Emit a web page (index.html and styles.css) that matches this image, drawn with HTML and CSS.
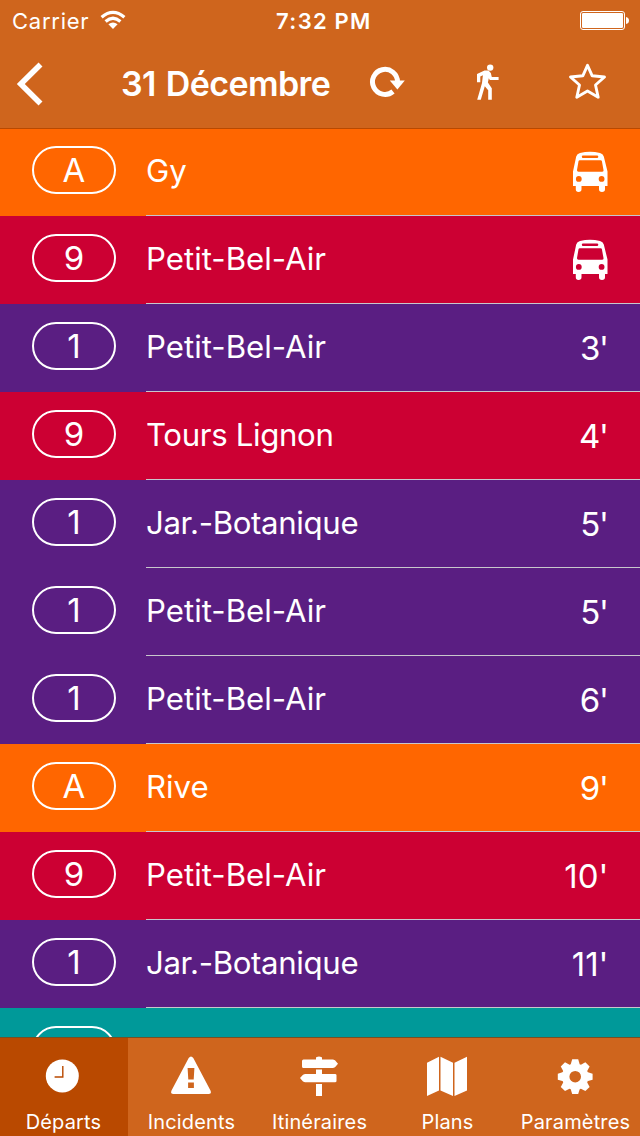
FILE: index.html
```html
<!DOCTYPE html>
<html lang="fr">
<head>
<meta charset="utf-8">
<title>31 Décembre</title>
<link rel="stylesheet" href="styles.css">
</head>
<body>
<svg class="defs" width="0" height="0">
  <symbol id="bus" viewBox="0 0 36 42">
    <path fill="currentColor" fill-rule="evenodd" d="M1 35V20.500L4.200 5.500Q5 2.800 8 2.100Q18 -.5 28 2.100Q31 2.800 31.800 5.500L35.500 20.500V35H33V38.300Q33 41 30 41Q27 41 27 38.300V35H9.500V38.300Q9.500 41 6.500 41Q3.800 41 3.800 38.300V35ZM11 4.500Q9.800 4.500 9.800 5.800Q9.800 7 11 7H25Q26.300 7 26.300 5.800Q26.300 4.500 25 4.500ZM7.800 9.300Q6.700 9.300 6.500 10.300L5 19Q4.800 20.700 6.500 20.700H30Q31.800 20.700 31.500 19L29.900 10.300Q29.700 9.300 28.600 9.300ZM6.800 25A2.900 2.900 0 1 0 6.800 30.800A2.900 2.900 0 1 0 6.800 25ZM29.600 25A2.900 2.900 0 1 0 29.600 30.800A2.900 2.900 0 1 0 29.600 25Z"/>
  </symbol>
</svg>
<div class="app">
  <header class="header">
    <div class="status">
      <span class="carrier">Carrier</span>
      <svg class="wifi" width="26" height="20" viewBox="0 0 26 20">
        <g fill="none" stroke="#fff" stroke-width="3.200"><path d="M1.600 7.300Q13 -2.600 24.400 7.300"/><path d="M5.600 11.500Q13 5 20.400 11.500"/></g>
        <path fill="#fff" d="M8.400 14.200Q13 10.700 17.600 14.200L13 19Z"/>
      </svg>
      <span class="clock">7:32 PM</span>
      <svg class="battery" width="50" height="20" viewBox="0 0 50 20">
        <rect x=".5" y=".5" width="44" height="18" rx="2.500" fill="none" stroke="#fff"/>
        <rect x="2" y="2" width="41" height="15" rx="1.300" fill="#fff"/>
        <path fill="#fff" d="M46 6Q49 6.500 49 9.500Q49 12.500 46 13Z"/>
      </svg>
    </div>
    <nav class="nav">
      <svg class="back" width="28" height="44" viewBox="0 0 28 44"><path fill="none" stroke="#fff" stroke-width="5.600" d="M24.500 2.500L4.800 22L24.500 41.500"/></svg>
      <h1 class="title">31 Décembre</h1>
      <svg class="refresh" width="38" height="34" viewBox="0 0 38 34"><path fill="none" stroke="#fff" stroke-width="5" d="M25 26.500A12.500 12.500 0 1 1 29.500 17"/><path fill="#fff" d="M21.800 15.600H36.800L29.400 24.600Z"/></svg>
      <svg class="walk" width="24" height="38" viewBox="0 0 24 38"><circle cx="14.200" cy="4.600" r="3.200" fill="#fff"/><path fill="#fff" d="M1 11L8.500 7.500H12.500L14.800 10L15.800 14.100H22.600V17.100H13.800L12.800 15.300L11.900 19.500L15.800 25.300V36.800H12.200V27.300L8.800 23.300L4.800 36.800H1.200L6 20L6.900 12.300L4.300 13.500V19.300H1Z"/></svg>
      <svg class="star" width="40" height="40" viewBox="0 0 40 40"><path fill="none" stroke="#fff" stroke-width="2.900" stroke-linejoin="round" d="M19.500 4.300L24.200 14.800L36.500 16L27.500 24L30.200 36.200L19.500 30L8.800 36.200L11.500 24L2.500 16L14.800 14.800Z"/></svg>
    </nav>
  </header>

  <main class="list">
    <div class="row orange"><span class="line">A</span><div class="dest"><span class="name">Gy</span><svg class="bus"><use href="#bus"/></svg></div></div>
    <div class="row red"><span class="line">9</span><div class="dest"><span class="name">Petit-Bel-Air</span><svg class="bus"><use href="#bus"/></svg></div></div>
    <div class="row purple"><span class="line">1</span><div class="dest"><span class="name">Petit-Bel-Air</span><span class="time">3'</span></div></div>
    <div class="row red"><span class="line">9</span><div class="dest"><span class="name tight">Tours Lignon</span><span class="time">4'</span></div></div>
    <div class="row purple"><span class="line">1</span><div class="dest"><span class="name tight">Jar.-Botanique</span><span class="time">5'</span></div></div>
    <div class="row purple"><span class="line">1</span><div class="dest"><span class="name">Petit-Bel-Air</span><span class="time">5'</span></div></div>
    <div class="row purple"><span class="line">1</span><div class="dest"><span class="name">Petit-Bel-Air</span><span class="time">6'</span></div></div>
    <div class="row orange"><span class="line">A</span><div class="dest"><span class="name">Rive</span><span class="time">9'</span></div></div>
    <div class="row red"><span class="line">9</span><div class="dest"><span class="name">Petit-Bel-Air</span><span class="time wide">10'</span></div></div>
    <div class="row purple"><span class="line">1</span><div class="dest"><span class="name tight">Jar.-Botanique</span><span class="time wide">11'</span></div></div>
    <div class="row teal"><span class="line">22</span><div class="dest"></div></div>
  </main>

  <footer class="tabs">
    <div class="tab active">
      <svg class="icon" viewBox="0 0 48 48"><circle cx="22.300" cy="23.900" r="16.500" fill="#fff"/><path fill="none" stroke="#b94900" stroke-width="1.400" d="M22.800 14V25H14.600"/></svg>
      <span>Départs</span>
    </div>
    <div class="tab">
      <svg class="icon" viewBox="0 0 48 48"><path fill="#fff" fill-rule="evenodd" d="M20.700 6Q23 2.800 25.300 6L42.600 38.800Q43.800 42 40.500 42H5.500Q2.200 42 3.400 38.800ZM19.600 16L20.300 27.500H25.700L26.400 16ZM20.100 30.500V36H25.900V30.500Z"/></svg>
      <span>Incidents</span>
    </div>
    <div class="tab">
      <svg class="icon" viewBox="0 0 48 48"><path fill="#fff" d="M20 8V6Q20 4.500 23 4.500Q26 4.500 26 6V7.500H37L39 8.300L42 11.800L39 15.300L37 16H7.500Q6 16 6 14.500V9Q6 7.500 7.500 7.500H20ZM20 17.500H26V21.900H39Q40.500 21.900 40.500 23.300V28.900Q40.500 30.300 39 30.300H9L7 29.500L4 26.100L7 22.700L9 21.900H20ZM20 32H26V44H20Z"/></svg>
      <span>Itinéraires</span>
    </div>
    <div class="tab">
      <svg class="icon" viewBox="0 0 48 48"><path fill="#fff" d="M3 10.700L15 4.800V38.500L3 44ZM16.500 4.800L29 10.700V44L16.500 38.500ZM30.500 10.700L43 4.800V38.500L30.500 44Z"/></svg>
      <span>Plans</span>
    </div>
    <div class="tab">
      <svg class="icon" viewBox="0 0 48 48"><circle cx="23.200" cy="24.700" r="9.500" fill="none" stroke="#fff" stroke-width="7.400"/>
        <g fill="#fff" transform="translate(23.2 24.700)"><path id="tooth" d="M-4.600 -12L-3 -17.400H3L4.600 -12Z"/><use href="#tooth" transform="rotate(45)"/><use href="#tooth" transform="rotate(90)"/><use href="#tooth" transform="rotate(135)"/><use href="#tooth" transform="rotate(180)"/><use href="#tooth" transform="rotate(225)"/><use href="#tooth" transform="rotate(270)"/><use href="#tooth" transform="rotate(315)"/></g></svg>
      <span>Paramètres</span>
    </div>
  </footer>
</div>
</body>
</html>
```
FILE: styles.css
```css
* { box-sizing: border-box; }
body { margin: 0; font-family: Inter, "Liberation Sans", sans-serif; color: #fff; }
svg { display: block; flex: none; }
.defs { position: absolute; }
.app { width: 640px; height: 1136px; display: flex; flex-direction: column; overflow: hidden; }

.header { flex: none; height: 129px; background: #cf651d; border-bottom: 1px solid #b94900; }
.status { height: 40px; display: grid; grid-template-columns: 88px 26px 1fr 50px; align-items: start; padding: 0 10px 0 12px; font-size: 22px; line-height: 42px; white-space: nowrap; }
.carrier { letter-spacing: .75px; }
.wifi { margin-top: 10px; }
.clock { padding-left: 150px; font-weight: 600; letter-spacing: 1.35px; word-spacing: -.5px; }
.battery { margin-top: 11px; }
.nav { height: 88px; display: flex; align-items: flex-start; }
.back { margin: 22px 0 0 16px; }
.title { margin: 0 0 0 77px; width: 245px; font-size: 34px; line-height: 88px; font-weight: 600; letter-spacing: -.6px; word-spacing: 2px; white-space: nowrap; }
.refresh { margin-top: 25px; margin-left: 2px; }
.walk { margin: 23px 0 0 70px; }
.star { margin: 21px 0 0 68px; }

.list { flex: 1; min-height: 0; overflow: hidden; }
.row { height: 88px; display: flex; }
.row:first-child { height: 87px; }
.row:first-child .line { margin-top: 17px; }
.row:first-child .name { line-height: 84px; }
.row:first-child .bus { margin-top: 22px; }
.orange { background: #ff6600; }
.red { background: #cc0033; }
.purple { background: #5a1e82; }
.teal { background: #009999; }
.line { flex: none; width: 84px; height: 48px; margin: 18px 30px 0 32px; border: 2px solid #fff; border-radius: 24px; text-align: center; font-size: 33px; line-height: 44px; }
.dest { flex: 1; display: flex; justify-content: space-between; align-items: flex-start; padding-right: 32px; border-bottom: 1px solid #c8c7cc; }
.name { font-size: 31.2px; line-height: 86px; white-space: nowrap; }
.tight { letter-spacing: -.35px; }
.time { margin-right: .2px; font-size: 33px; line-height: 88px; letter-spacing: -1.2px; }
.wide { letter-spacing: 0; margin-right: -.5px; }
.bus { width: 36px; height: 42px; margin-top: 23px; }

.tabs { flex: none; height: 99px; display: grid; grid-template-columns: repeat(5, 1fr); background: #cf651d; border-top: 1px solid #765023; }
.tab { display: flex; flex-direction: column; align-items: center; padding-top: 14px; font-size: 20px; line-height: 24px; letter-spacing: .15px; }
.active { background: #b94900; }
.icon { width: 48px; height: 48px; }
.tab span { margin: 10px 1px 0 0; white-space: nowrap; }
```
